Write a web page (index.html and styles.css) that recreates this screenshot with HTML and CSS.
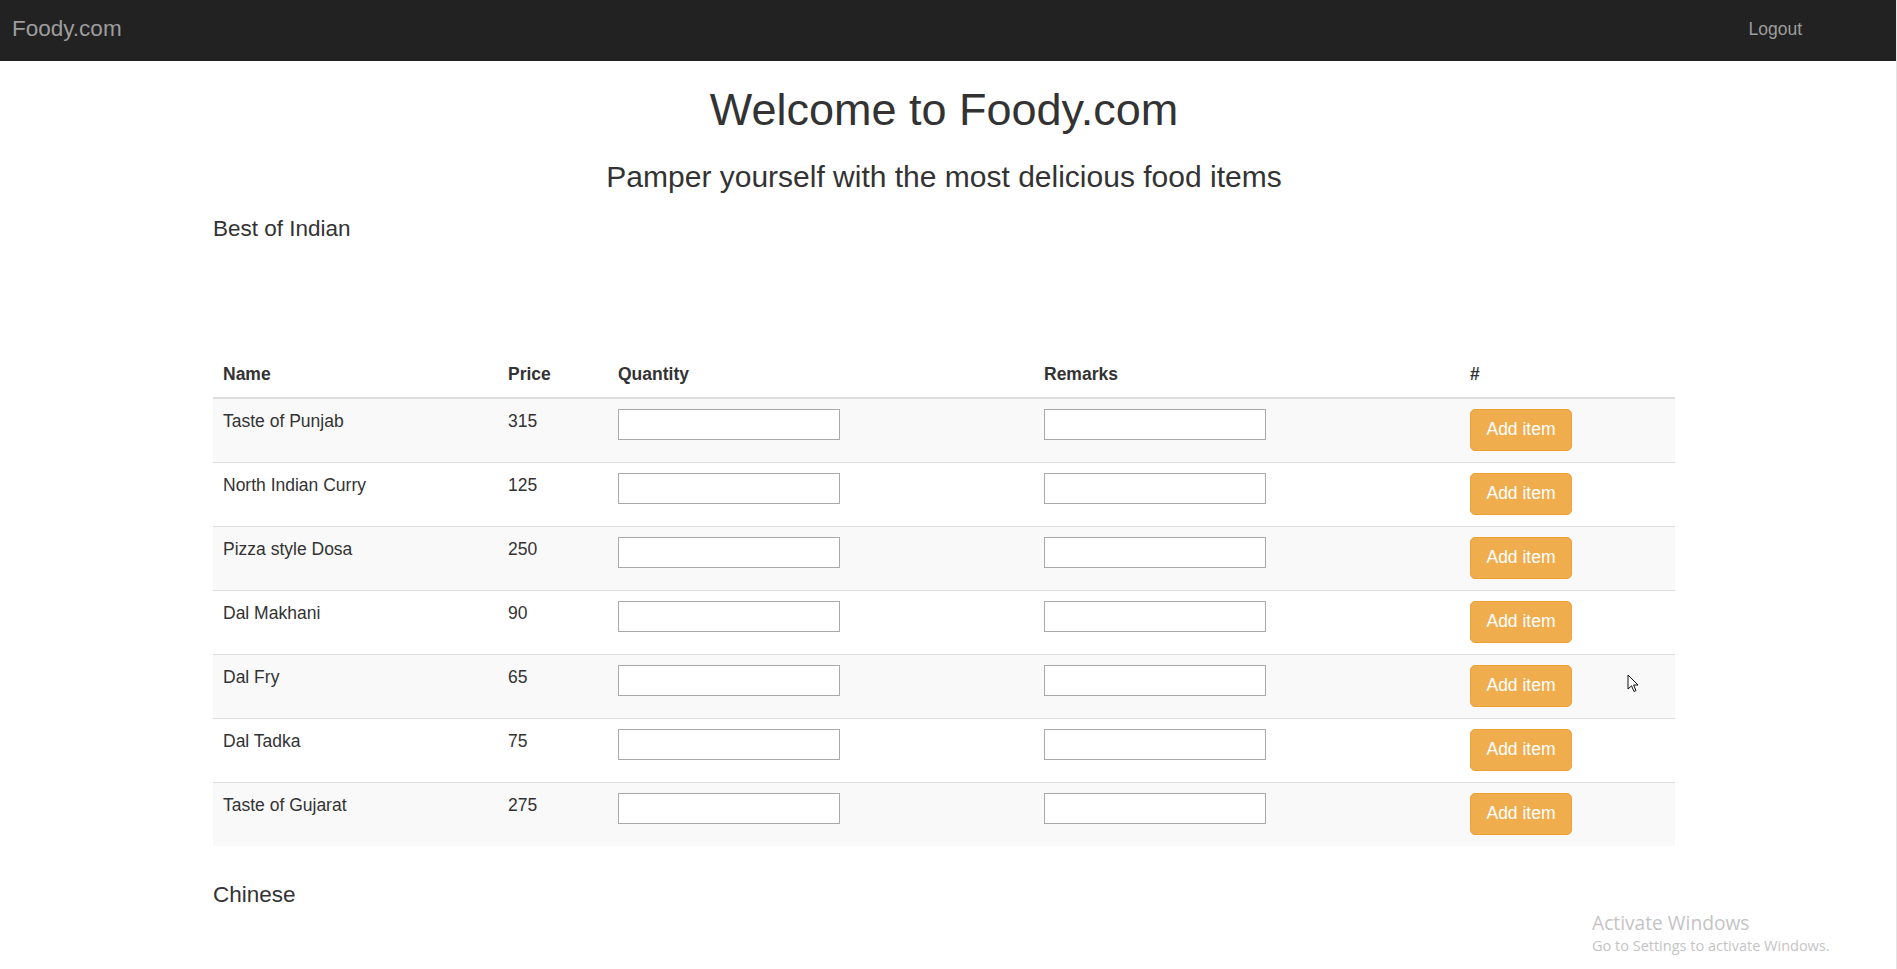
FILE: index.html
```html
<!DOCTYPE html>
<html lang="en">
<head>
<meta charset="utf-8">
<title>Foody.com</title>
<link rel="stylesheet" href="styles.css">
</head>
<body>
<nav class="navbar">
  <a class="brand" href="#">Foody.com</a>
  <a class="logout" href="#">Logout</a>
</nav>
<main class="main">
  <div class="container">
    <h1 class="title">Welcome to Foody.com</h1>
    <h3 class="subtitle">Pamper yourself with the most delicious food items</h3>
    <h4 class="section-title spaced">Best of Indian</h4>
    <table class="menu-table">
      <colgroup>
        <col class="c-name"><col class="c-price"><col class="c-qty"><col class="c-rem"><col class="c-act">
      </colgroup>
      <thead>
        <tr><th>Name</th><th>Price</th><th>Quantity</th><th>Remarks</th><th>#</th></tr>
      </thead>
      <tbody>
        <tr><td>Taste of Punjab</td><td>315</td><td><input class="field" type="text"></td><td><input class="field" type="text"></td><td><button class="btn-add">Add item</button></td></tr>
        <tr><td>North Indian Curry</td><td>125</td><td><input class="field" type="text"></td><td><input class="field" type="text"></td><td><button class="btn-add">Add item</button></td></tr>
        <tr><td>Pizza style Dosa</td><td>250</td><td><input class="field" type="text"></td><td><input class="field" type="text"></td><td><button class="btn-add">Add item</button></td></tr>
        <tr><td>Dal Makhani</td><td>90</td><td><input class="field" type="text"></td><td><input class="field" type="text"></td><td><button class="btn-add">Add item</button></td></tr>
        <tr><td>Dal Fry</td><td>65</td><td><input class="field" type="text"></td><td><input class="field" type="text"></td><td><button class="btn-add">Add item</button></td></tr>
        <tr><td>Dal Tadka</td><td>75</td><td><input class="field" type="text"></td><td><input class="field" type="text"></td><td><button class="btn-add">Add item</button></td></tr>
        <tr><td>Taste of Gujarat</td><td>275</td><td><input class="field" type="text"></td><td><input class="field" type="text"></td><td><button class="btn-add">Add item</button></td></tr>
      </tbody>
    </table>
    <h4 class="section-title next">Chinese</h4>
  </div>
</main>
<svg class="cursor" width="13" height="20" viewBox="0 0 13 20" xmlns="http://www.w3.org/2000/svg">
  <path d="M1 1 L1 15 L4.5 11.8 L7 17.5 L9 16.6 L6.6 11 L11 11 Z" fill="#fff" stroke="#111" stroke-width="1" stroke-linejoin="miter"/>
</svg>
<div class="watermark">
  <div class="wm-title">Activate Windows</div>
  <div class="wm-sub">Go to Settings to activate Windows.</div>
</div>
</body>
</html>
```
FILE: styles.css
```css
html {
  border-right: 1px solid #e4e4e4;
  background: #fff;
}
body {
  margin: 0;
  font-family: "Liberation Sans", Arial, Helvetica, sans-serif;
  font-size: 17.5px;
  line-height: 1.42857;
  color: #333;
  background: #fff;
  height: 969px;
  overflow: hidden;
}
.navbar {
  height: 61px;
  background: #222;
  display: flex;
  align-items: center;
  justify-content: space-between;
  padding: 0 94px 0 12px;
}
.brand {
  font-size: 22.5px;
  color: #9d9d9d;
  text-decoration: none;
  margin-top: -2px;
}
.logout {
  font-size: 17.5px;
  color: #9d9d9d;
  text-decoration: none;
  margin-top: -2px;
}
.main {
  padding-right: 8px;
}
.container {
  width: 1462px;
  margin: 0 auto;
}
.title {
  margin: 24px 0 0;
  font-size: 45px;
  line-height: 1.1;
  font-weight: normal;
  text-align: center;
}
.subtitle {
  margin: 25.5px 0 0;
  font-size: 30px;
  line-height: 1.1;
  font-weight: normal;
  text-align: center;
}
.section-title {
  font-size: 22.5px;
  line-height: 1.1;
  font-weight: normal;
  margin: 0;
}
.spaced {
  margin-top: 24px;
  margin-bottom: 110px;
}
.next {
  margin-top: 37px;
}
.menu-table {
  width: 100%;
  border-collapse: collapse;
  table-layout: fixed;
}
.c-name { width: 285px; }
.c-price { width: 110px; }
.c-qty { width: 426px; }
.c-rem { width: 426px; }
.c-act { width: 215px; }
.menu-table th {
  text-align: left;
  font-weight: bold;
  padding: 10px;
  line-height: 25px;
  border-bottom: 2px solid #ddd;
}
.menu-table td {
  padding: 10px;
  line-height: 25px;
  border-top: 1px solid #ddd;
  vertical-align: top;
}
.menu-table tbody tr:nth-child(odd) {
  background: #f9f9f9;
}
.field {
  display: block;
  box-sizing: border-box;
  width: 222px;
  height: 31px;
  border: 1px solid #a9a9a9;
  background: #fff;
  padding: 0 4px;
  margin: 0;
}
.btn-add {
  display: block;
  box-sizing: border-box;
  width: 102px;
  height: 42px;
  font-family: "Liberation Sans", Arial, Helvetica, sans-serif;
  font-size: 17.5px;
  color: #fff;
  background: #f0ad4e;
  border: 1px solid #eea236;
  border-radius: 5px;
  padding: 0;
}
.menu-table td .btn-add {
  margin-bottom: 1px;
}
.cursor {
  position: absolute;
  left: 1627px;
  top: 674px;
}
.watermark {
  position: absolute;
  left: 1592px;
  top: 910px;
  font-family: "Open Sans", "Noto Sans", sans-serif;
  color: #c4c4c4;
}
.wm-title {
  font-size: 19.2px;
  line-height: 25px;
}
.wm-sub {
  font-size: 14.5px;
  line-height: 21px;
}
```
